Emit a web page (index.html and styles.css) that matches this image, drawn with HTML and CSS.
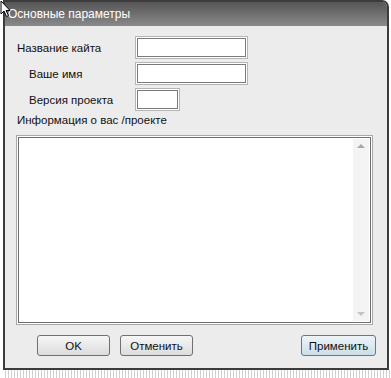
FILE: index.html
```html
<!DOCTYPE html>
<html lang="ru">
<head>
    <meta charset="UTF-8">
    <title>Основные параметры</title>
    <link rel="stylesheet" href="styles.css">
</head>
<body>
    <!-- Dialog window -->
    <div class="window">
        <div class="titlebar">Основные параметры</div>
        <div class="content">
            <div class="row">
                <label class="label">Название кайта</label>
                <input class="field" type="text">
            </div>
            <div class="row">
                <label class="label indent">Ваше имя</label>
                <input class="field" type="text">
            </div>
            <div class="row">
                <label class="label indent">Версия проекта</label>
                <input class="field short" type="text">
            </div>
            <div class="info-label">Информация о вас /проекте</div>
            <div class="memo">
                <div class="memo-text"></div>
                <div class="scrollbar">
                    <span class="arrow up"></span>
                    <span class="arrow down"></span>
                </div>
            </div>
            <div class="buttons">
                <button class="btn">OK</button>
                <button class="btn">Отменить</button>
                <button class="btn primary">Применить</button>
            </div>
        </div>
    </div>
    <div class="shadow"></div>

    <!-- mouse pointer over the corner -->
    <svg class="cursor" width="12" height="18" viewBox="0 0 12 18">
        <path d="M1 1 L1 14 L4 11 L6.5 16.5 L8.5 15.5 L6 10.5 L10 10.5 Z" fill="#fff" stroke="#000" stroke-width="1"/>
    </svg>
</body>
</html>
```

FILE: styles.css
```css
body {
    margin: 0;
    background: #fff;
    font-family: "Liberation Sans", Arial, sans-serif;
    font-size: 11.5px;
    color: #111;
}
.window {
    width: 382px;
    margin-left: 3px;
    border: 2px solid #3c3c3c;
    border-top-right-radius: 7px;
    overflow: hidden;
    background: #ececec;
}
.titlebar {
    height: 24px;
    line-height: 25px;
    padding-left: 3px;
    color: #fff;
    font-size: 12px;
    background: linear-gradient(#555, #7a7a7a 70%, #8a8a8a);
}
.content {
    padding: 10px 12px 12px 12px;
}
.row {
    display: flex;
    align-items: center;
    height: 23px;
    margin-bottom: 3px;
}
.label {
    width: 118px;
}
.label.indent {
    padding-left: 12px;
    width: 106px;
}
.field {
    box-sizing: border-box;
    width: 113px;
    height: 23px;
    margin: 0;
    padding: 0;
    background: #fff;
    border: 1px solid #b5b5b5;
    box-shadow: inset 0 0 0 1px #fff, inset 0 0 0 2px #7a7a7a;
    outline: none;
}
.field.short {
    width: 45px;
}
.info-label {
    margin-top: 2px;
    height: 21px;
}
.memo {
    display: flex;
    width: 357px;
    height: 190px;
    box-sizing: border-box;
    margin-left: -1px;
    border: 1px solid #a8a8a8;
    box-shadow: inset 0 0 0 1px #fff, inset 0 0 0 2px #6e6e6e;
    background: #fff;
    padding: 3px;
}
.memo-text {
    flex: 1;
}
.scrollbar {
    width: 16px;
    background: #f4f4f4;
    display: flex;
    flex-direction: column;
    justify-content: space-between;
    align-items: center;
    padding: 5px 0;
}
.arrow {
    width: 0;
    height: 0;
    border-left: 4px solid transparent;
    border-right: 4px solid transparent;
}
.arrow.up {
    border-bottom: 4px solid #a8a8a8;
}
.arrow.down {
    border-top: 4px solid #c4c4c4;
}
.buttons {
    display: flex;
    margin-top: 10px;
    padding-left: 20px;
}
.btn {
    width: 73px;
    height: 21px;
    margin-right: 10px;
    font-family: "Liberation Sans", Arial, sans-serif;
    font-size: 11.5px;
    color: #111;
    border: 1px solid #707070;
    border-radius: 3px;
    background: linear-gradient(#f6f6f6, #dcdcdc);
    padding: 0;
}
.btn.primary {
    margin-left: auto;
    margin-right: -1px;
    width: 75px;
    border-color: #4a7fa6;
    background: linear-gradient(#eef4f8, #cbdde9);
}
.shadow {
    height: 8px;
    margin-left: 5px;
    background: repeating-linear-gradient(90deg, #d0d0d0 0 1px, #fff 1px 3px);
}
.cursor {
    position: absolute;
    left: 0;
    top: 0;
}
```
